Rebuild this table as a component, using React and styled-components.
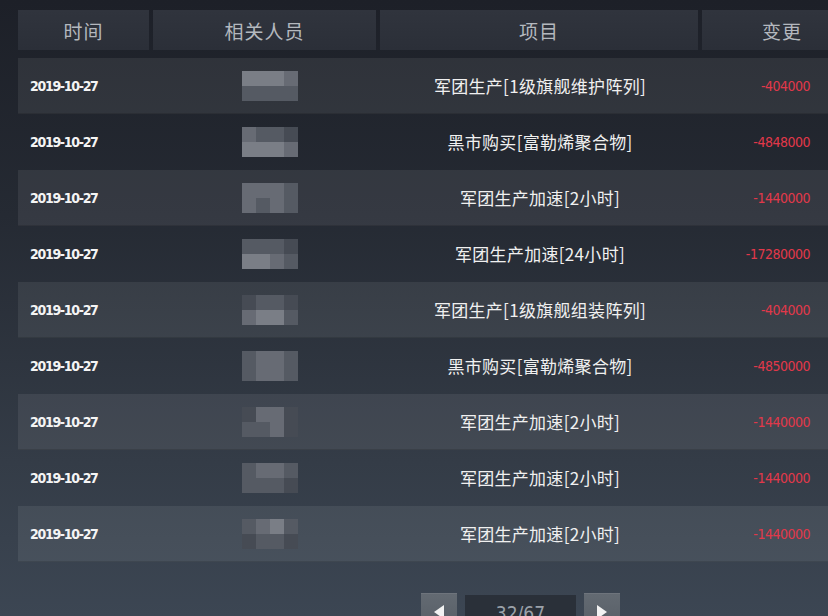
import React from 'react'
import styled, { createGlobalStyle } from 'styled-components'

const GlobalStyle = createGlobalStyle`
  html, body {
    margin: 0;
    padding: 0;
    overflow: hidden;
  }
  body {
    width: 828px;
    height: 616px;
    background: linear-gradient(180deg, #1d2028 0%, #252a33 35%, #343c47 75%, #3c4653 100%);
    font-family: "Noto Sans CJK SC", "Noto Sans", sans-serif;
  }
`

const records = [
  { item: '军团生产[1级旗舰维护阵列]', change: '-404000', mosaic: [[3, 3, 3, 2], [1, 1, 1, 1]] },
  { item: '黑市购买[富勒烯聚合物]', change: '-4848000', mosaic: [[2, 1, 1, 0], [3, 3, 3, 2]] },
  { item: '军团生产加速[2小时]', change: '-1440000', mosaic: [[2, 2, 2, 1], [2, 1, 2, 1]] },
  { item: '军团生产加速[24小时]', change: '-17280000', mosaic: [[1, 1, 1, 0], [3, 3, 2, 1]] },
  { item: '军团生产[1级旗舰组装阵列]', change: '-404000', mosaic: [[0, 1, 1, 0], [2, 3, 3, 1]] },
  { item: '黑市购买[富勒烯聚合物]', change: '-4850000', mosaic: [[1, 2, 2, 1], [1, 2, 2, 1]] },
  { item: '军团生产加速[2小时]', change: '-1440000', mosaic: [[0, 2, 2, 0], [1, 1, 2, 0]] },
  { item: '军团生产加速[2小时]', change: '-1440000', mosaic: [[1, 2, 2, 1], [1, 1, 1, 0]] },
  { item: '军团生产加速[2小时]', change: '-1440000', mosaic: [[1, 2, 3, 1], [0, 1, 1, 0]] },
]

const shades = ['#464b54', '#555a63', '#676b74', '#7a7e86']

function App() {
  return (
    <>
      <GlobalStyle />
      <Page>
        <Header>
          <HeadCell>时间</HeadCell>
          <HeadCell>相关人员</HeadCell>
          <HeadCell>项目</HeadCell>
          <HeadCell $align="right">变更</HeadCell>
        </Header>
        <Rows>
          {records.map((r, i) => (
            <Row key={i} $odd={i % 2 === 0}>
              <DateCell>2019-10-27</DateCell>
              <PersonCell>
                <Mosaic>
                  {r.mosaic.flat().map((s, j) => (
                    <Tile key={j} $shade={shades[s]} />
                  ))}
                </Mosaic>
              </PersonCell>
              <ItemCell>{r.item}</ItemCell>
              <ChangeCell>{r.change}</ChangeCell>
            </Row>
          ))}
        </Rows>
        <Pager>
          <PageButton>
            <svg width="14" height="16" viewBox="0 0 14 16">
              <path d="M12 1 L2 8 L12 15 Z" fill="#f2f2f2" />
            </svg>
          </PageButton>
          <PageNumber>32/67</PageNumber>
          <PageButton>
            <svg width="14" height="16" viewBox="0 0 14 16">
              <path d="M2 1 L12 8 L2 15 Z" fill="#f2f2f2" />
            </svg>
          </PageButton>
        </Pager>
      </Page>
    </>
  )
}

export default App

const Page = styled.div`
  padding: 10px 0 0 18px;
  width: 828px;
  box-sizing: border-box;
`

const Header = styled.div`
  display: grid;
  grid-template-columns: 131px 223px 318px 1fr;
  column-gap: 4px;
  height: 40px;
  margin-right: -10px;
`

const HeadCell = styled.div`
  display: flex;
  align-items: center;
  justify-content: ${p => (p.$align === 'right' ? 'flex-end' : 'center')};
  padding-right: ${p => (p.$align === 'right' ? '36px' : '0')};
  background: linear-gradient(180deg, #30343d 0%, #2b2f38 100%);
  color: #b4b8be;
  font-size: 19px;
  letter-spacing: 1px;
`

const Rows = styled.div`
  margin-top: 8px;
  display: flex;
  flex-direction: column;
`

const Row = styled.div`
  display: grid;
  grid-template-columns: 135px 226px 322px 1fr;
  height: 56px;
  align-items: center;
  background: ${p => (p.$odd ? 'rgba(255, 255, 255, 0.075)' : 'transparent')};
  border-bottom: ${p => (p.$odd ? '1px solid rgba(0,0,0,0.12)' : '1px solid transparent')};
  box-sizing: border-box;
`

const DateCell = styled.div`
  padding-left: 12px;
  color: #f4f4f4;
  font-family: "DejaVu Sans Condensed", "DejaVu Sans", sans-serif;
  font-weight: bold;
  font-size: 14px;
  letter-spacing: -1.3px;
`

const PersonCell = styled.div`
  display: flex;
  justify-content: center;
  padding-left: 8px;
`

const Mosaic = styled.div`
  display: grid;
  grid-template-columns: repeat(4, 14px);
  grid-auto-rows: 15px;
  filter: blur(0.4px);
`

const Tile = styled.div`
  background: ${p => p.$shade};
`

const ItemCell = styled.div`
  text-align: center;
  color: #f0f0f0;
  font-size: 17px;
  letter-spacing: 0.3px;
`

const ChangeCell = styled.div`
  text-align: right;
  padding-right: 18px;
  color: #e2384a;
  font-family: "DejaVu Sans Condensed", "DejaVu Sans", sans-serif;
  font-size: 14px;
  letter-spacing: -0.5px;
`

const Pager = styled.div`
  display: flex;
  gap: 8px;
  margin-top: 31px;
  margin-left: 403px;
`

const PageButton = styled.div`
  width: 36px;
  height: 36px;
  display: flex;
  align-items: center;
  justify-content: center;
  background: linear-gradient(180deg, #636a72 0%, #575e66 100%);
  border-top: 1px solid #6e747c;
  box-sizing: border-box;
`

const PageNumber = styled.div`
  width: 111px;
  height: 36px;
  margin-top: 2px;
  display: flex;
  align-items: center;
  justify-content: center;
  background: #2a3039;
  color: #9ba1a9;
  font-family: "DejaVu Sans Condensed", "DejaVu Sans", sans-serif;
  font-size: 19px;
`
